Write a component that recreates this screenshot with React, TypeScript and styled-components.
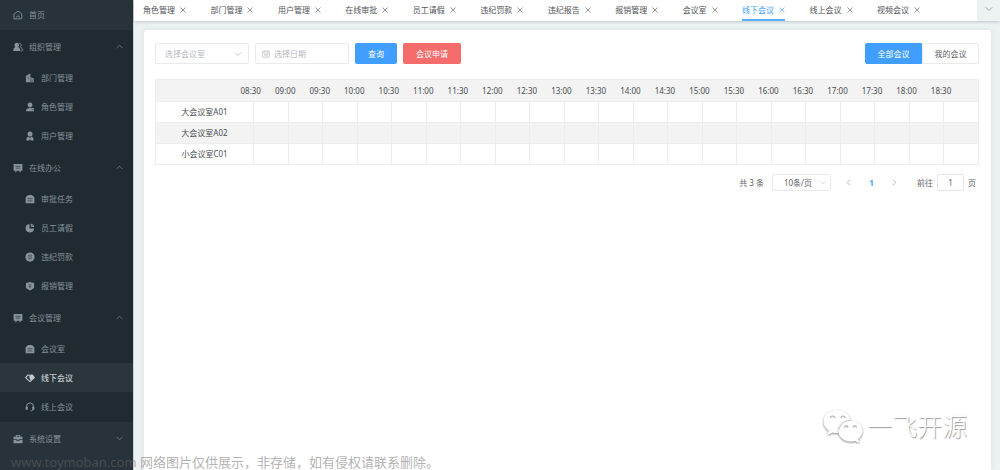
import React, { useState } from "react";
import styled, { createGlobalStyle } from "styled-components";

const GlobalStyle = createGlobalStyle`
  * { box-sizing: border-box; }
  body {
    margin: 0;
    background: #ecf1f2;
    color: #606266;
    font-family: "Noto Sans", "Noto Sans CJK SC", sans-serif;
    font-size: 8px;
    line-height: 12px;
  }
  button, input, select { font: inherit; color: inherit; margin: 0; }
  ul { list-style: none; margin: 0; padding: 0; }
`;

const Layout = styled.div`
  position: relative;
  display: flex;
  min-height: 100vh;
  overflow: hidden;
`;

/* ---------- sidebar ---------- */

const Sidebar = styled.nav`
  flex: 0 0 133px;
  background: #28323a;
  color: #87929a;
`;

const HomeLink = styled.a`
  display: flex;
  align-items: center;
  gap: 6px;
  height: 30px;
  padding: 0 13px;
  color: inherit;
  text-decoration: none;
`;

const Group = styled.section<{ $open: boolean }>`
  background: ${(p) => (p.$open ? "#202b31" : "#28323a")};
`;

const GroupButton = styled.button`
  display: flex;
  align-items: center;
  gap: 6px;
  width: 100%;
  height: 33px;
  padding: 0 10px 0 13px;
  border: 0;
  background: transparent;
  text-align: left;
  cursor: pointer;
`;

const GroupName = styled.span`
  flex: 1;
`;

const SubMenu = styled.ul`
  padding-bottom: 1px;
`;

const SubLink = styled.a<{ $active: boolean }>`
  display: flex;
  align-items: center;
  gap: 6px;
  height: 29px;
  padding-left: 25px;
  text-decoration: none;
  color: ${(p) => (p.$active ? "#c3cbcf" : "inherit")};
  background: ${(p) => (p.$active ? "#2b353c" : "transparent")};
  font-weight: ${(p) => (p.$active ? 500 : 400)};
`;

const IconSvg = styled.svg<{ $size: number }>`
  flex: none;
  display: block;
  width: ${(p) => p.$size}px;
  height: ${(p) => p.$size}px;
`;

/* ---------- main column ---------- */

const Main = styled.main`
  flex: 1;
  min-width: 0;
  display: flex;
  flex-direction: column;
  border-left: 1px solid #c9cfd2;
`;

const TabStrip = styled.div`
  display: flex;
  height: 21px;
  background: #fff;
  box-shadow: 0 1px 3px rgba(0, 21, 41, 0.2);
`;

const TabList = styled.div`
  flex: 1;
  display: flex;
  justify-content: space-between;
  padding: 0 57px 0 9px;
`;

const Tab = styled.div<{ $active: boolean }>`
  display: flex;
  align-items: center;
  gap: 5px;
  border-bottom: 2px solid ${(p) => (p.$active ? "#5aaeff" : "transparent")};
  color: ${(p) => (p.$active ? "#409eff" : "#4f5257")};
`;

const PlainButton = styled.button`
  display: flex;
  align-items: center;
  justify-content: center;
  padding: 0;
  border: 0;
  background: transparent;
  cursor: pointer;
`;

const CloseTab = styled(PlainButton)`
  opacity: 0.8;
`;

const MoreTabs = styled(PlainButton)`
  width: 23px;
  padding-bottom: 3px;
  background: #ecf1f2;
  color: #8a8f95;
`;

const Card = styled.section`
  flex: 1;
  margin: 9px 9px 0 10px;
  padding: 13px 12px 12px 11px;
  background: #fff;
  border-radius: 3px 3px 0 0;
  box-shadow: 0 0 6px rgba(0, 21, 41, 0.08);
`;

const Toolbar = styled.form`
  display: flex;
  align-items: center;
  gap: 6px;
  margin-bottom: 15px;
`;

const Field = styled.label<{ $width: number }>`
  display: flex;
  align-items: center;
  gap: 4px;
  width: ${(p) => p.$width}px;
  height: 21px;
  padding: 0 6px;
  border: 1px solid #e8eaee;
  border-radius: 2px;
  color: #b4b8c0;
`;

const FieldSelect = styled.select`
  flex: 1;
  min-width: 0;
  padding: 0 0 0 3px;
  border: 0;
  outline: 0;
  background: transparent;
  appearance: none;
`;

const FieldInput = styled.input`
  flex: 1;
  min-width: 0;
  padding: 0;
  border: 0;
  outline: 0;
  background: transparent;
  &::placeholder { color: #b4b8c0; opacity: 1; }
`;

const ActionButton = styled.button<{ $tone: "primary" | "danger" }>`
  height: 21px;
  padding: 0 13px;
  border: 0;
  border-radius: 2px;
  background: ${(p) => (p.$tone === "primary" ? "#409eff" : "#f56c6c")};
  color: #fff;
  cursor: pointer;
`;

const Segments = styled.div`
  display: flex;
  margin-left: auto;
`;

const Segment = styled.button<{ $active: boolean }>`
  width: 57px;
  height: 21px;
  padding: 0;
  border: 1px solid ${(p) => (p.$active ? "#409eff" : "#e8eaee")};
  background: ${(p) => (p.$active ? "#409eff" : "#fff")};
  color: ${(p) => (p.$active ? "#fff" : "#606266")};
  cursor: pointer;
  &:first-child { border-radius: 2px 0 0 2px; }
  &:last-child { border-radius: 0 2px 2px 0; }
`;

/* ---------- schedule ---------- */

const Schedule = styled.table`
  width: 100%;
  table-layout: fixed;
  border-collapse: collapse;
  color: #4a4d52;
`;

const RoomCol = styled.col`
  width: 98px;
`;

const HeadRow = styled.tr`
  height: 22px;
  background: #f3f3f3;
  border: 1px solid #ededed;
`;

const HeadCell = styled.th`
  padding: 0;
  font-weight: 400;
  text-align: left;
`;

/* Each label sits over the line that starts its half hour. */
const TimeLabel = styled.span`
  display: block;
  margin-left: -13px;
  white-space: nowrap;
`;

const RoomRow = styled.tr`
  height: 21px;
  &:nth-child(even) { background: #f3f3f3; }
`;

const RoomName = styled.th`
  padding: 0;
  border: 1px solid #ededed;
  font-weight: 400;
  text-align: center;
`;

const Slot = styled.td`
  padding: 0;
  border: 1px solid #ededed;
`;

/* ---------- pagination ---------- */

const Pager = styled.div`
  display: flex;
  align-items: center;
  justify-content: flex-end;
  margin-top: 9px;
  padding-right: 3px;
`;

const PageSize = styled(Field)`
  height: 17px;
  margin: 0 15px 0 8px;
  padding: 0 4px;
`;

const PageSizeSelect = styled(FieldSelect)`
  color: #606266;
  text-align: center;
  text-align-last: center;
`;

const PageButton = styled(PlainButton)<{ $current?: boolean }>`
  width: 23px;
  height: 17px;
  color: ${(p) => (p.$current ? "#409eff" : "#a9adb5")};
  font-weight: ${(p) => (p.$current ? 700 : 400)};
`;

const PageArrow = styled(PageButton)`
  width: 5px;
`;

const PageNumbers = styled.div`
  display: flex;
  align-items: center;
  gap: 9px;
  margin-right: 20px;
`;

const Jump = styled.label`
  display: flex;
  align-items: center;
  gap: 4px;
`;

const JumpInput = styled.input`
  width: 27px;
  height: 17px;
  padding: 0;
  border: 1px solid #e3e5ea;
  border-radius: 2px;
  text-align: center;
`;

/* ---------- overlays ---------- */

const Brand = styled.div`
  position: absolute;
  right: 33px;
  bottom: 24px;
  display: flex;
  align-items: center;
  gap: 3px;
  color: #fff;
  font-size: 25px;
  line-height: 40px;
  font-weight: 300;
  text-shadow: 1px 1px 1px #999;
  pointer-events: none;
`;

const BrandLogo = styled.svg`
  display: block;
  width: 42px;
  height: 36px;
`;

const Bubble = styled.g`
  filter: drop-shadow(0 1px 1px #888);
`;

const Notice = styled.p`
  position: absolute;
  left: 11px;
  bottom: -1px;
  margin: 0;
  font-size: 13px;
  line-height: 18px;
  white-space: nowrap;
  color: rgba(128, 128, 128, 0.62);
  pointer-events: none;
`;

const NoticeSite = styled.span`
  color: rgba(105, 105, 105, 0.5);
`;

/* ---------- icons ---------- */

type IconName =
  | "home" | "users" | "office" | "role" | "person" | "board" | "bag" | "pie"
  | "round" | "shield" | "tag" | "headset" | "toolbox" | "calendar"
  | "up" | "down" | "left" | "right" | "close";

const line = { fill: "none", stroke: "currentColor", strokeLinecap: "round", strokeLinejoin: "round" } as const;
const cut = "#39444b";

const shapes: Record<IconName, React.ReactNode> = {
  home: (
    <g {...line} strokeWidth="1.4">
      <path d="M2 6.2 8 1.6l6 4.6v7.900H2z" />
      <path d="M5.400 11.400a2.700 2.700 0 0 1 5.200 0" />
    </g>
  ),
  users: (
    <>
      <path fill="currentColor" d="M6 1.200a3.700 3.700 0 0 1 2.200 6.700c2 .8 3.300 2.600 3.300 5v1.600H.5v-1.600c0-2.400 1.300-4.200 3.300-5A3.700 3.700 0 0 1 6 1.200z" />
      <path {...line} strokeWidth="1.300" d="M10.500 2a3.200 3.200 0 0 1 1 6c2.300.8 3.600 2.500 3.600 5v1.200h-2.200" />
    </>
  ),
  office: (
    <>
      <path fill="currentColor" d="M1.500 14.600V4.400L8.600.9v5.300L14 8.600v6z" />
      <path stroke={cut} strokeWidth="1.100" d="M4 6.500h2.400M4 9.300h2.400M9.300 6v8.600M11.500 10v4" />
    </>
  ),
  role: (
    <>
      <circle cx="8" cy="4.800" r="3.900" fill="currentColor" />
      <path fill="currentColor" d="M1.500 14.800c0-3.500 2.500-5.300 6-5.300h7v2.300h-3.800v1h3.800v2z" />
    </>
  ),
  person: (
    <>
      <circle cx="8" cy="4.800" r="4" fill="currentColor" />
      <path fill="currentColor" d="M2 15c0-3.500 1.300-5.600 4-6.200l2 3 2-3c2.700.6 4 2.700 4 6.200H9.300L8 12.700 6.700 15z" />
    </>
  ),
  board: (
    <>
      <path fill="currentColor" d="M1 1.500h14v10.800h-3.200l1 2.500h-1.900l-1-2.500H6.100l-1 2.500H3.200l1-2.500H1z" />
      <path stroke={cut} strokeWidth="1.300" d="M4 5.300h8M4.500 8.200h7" />
    </>
  ),
  bag: (
    <>
      <path fill="currentColor" d="M1 5.200 5 1.500h6l4 3.700v9.500H1z" />
      <path stroke={cut} strokeWidth="1.300" d="M4 7.500h8M4 11h8" />
    </>
  ),
  pie: (
    <>
      <path fill="currentColor" d="M7.200 1.500v7.300h7.300A6.800 6.800 0 1 1 7.200 1.500z" />
      <path fill="currentColor" d="M9.300 1a6 6 0 0 1 5.500 5.500H9.300z" />
      <path stroke={cut} strokeWidth="1" d="m10 5.500 3.500-3.300" />
    </>
  ),
  round: (
    <>
      <circle cx="8" cy="8" r="7.400" fill="currentColor" />
      <path fill="none" stroke={cut} strokeWidth="1.200" d="M4.800 5.300h6.400M4.800 8h6.400M5.500 10.800h5" />
    </>
  ),
  shield: (
    <>
      <path fill="currentColor" d="M1.500 2.800H5L8 1l3 1.800h3.500v8.500L11 13.500 8 15.300l-3-1.800-3.500-2.200z" />
      <path fill="none" stroke={cut} strokeWidth="1.200" d="m6 4.800 2 2.400 2-2.400M8 7.200v4M6 8.800h4" />
    </>
  ),
  tag: (
    <>
      <path {...line} strokeWidth="1.700" d="M8 13.800 1 7.500l3.600-4.200L8 3.600l3.500-.5L15 7.200z" />
      <path fill="currentColor" d="m6.500 6.500 2.800-3.400 2.700.2 3 4-5.500 5.200z" />
    </>
  ),
  headset: (
    <>
      <path {...line} strokeWidth="1.600" d="M2.500 9V7a5.500 5.500 0 0 1 11 0v3.500c0 2.300-1.500 3.500-4 3.700" />
      <rect x="1" y="7" width="3.600" height="5.500" rx="1" fill="currentColor" />
      <rect x="11.400" y="7" width="3.600" height="5.500" rx="1" fill="currentColor" />
    </>
  ),
  toolbox: (
    <>
      <path fill="currentColor" d="M.8 4.200h3.700V1.500h7v2.700h3.700v4.200H.8zM6 4.200h4V2.900H6zM.8 9.600h4.700v1.600h5V9.600h4.700v5H.8z" />
      <path fill="currentColor" d="M6.800 8h2.400v2H6.800z" />
    </>
  ),
  calendar: <path {...line} strokeWidth="1.200" d="M1.500 2.500h13v12h-13zM1.500 6.200h13M4.800 1v3M11.200 1v3M4.500 9h7M4.500 11.700h7" />,
  up: <path {...line} strokeWidth="1.500" d="m2 11 6-6 6 6" />,
  down: <path {...line} strokeWidth="1.500" d="m2 5 6 6 6-6" />,
  left: <path {...line} strokeWidth="2" d="m11 2-6 6 6 6" />,
  right: <path {...line} strokeWidth="2" d="m5 2 6 6-6 6" />,
  close: <path {...line} strokeWidth="2" d="m2 2 12 12M14 2 2 14" />,
};

const Icon = ({ name, size = 10 }: { name: IconName; size?: number }) => (
  <IconSvg $size={size} viewBox="0 0 16 16" aria-hidden="true">{shapes[name]}</IconSvg>
);

/* ---------- data ---------- */

type MenuItem = { name: string; icon: IconName };
type MenuGroup = MenuItem & { items: MenuItem[] };

const menu: MenuGroup[] = [
  {
    name: "组织管理", icon: "users",
    items: [
      { name: "部门管理", icon: "office" },
      { name: "角色管理", icon: "role" },
      { name: "用户管理", icon: "person" },
    ],
  },
  {
    name: "在线办公", icon: "board",
    items: [
      { name: "审批任务", icon: "bag" },
      { name: "员工请假", icon: "pie" },
      { name: "违纪罚款", icon: "round" },
      { name: "报销管理", icon: "shield" },
    ],
  },
  {
    name: "会议管理", icon: "board",
    items: [
      { name: "会议室", icon: "bag" },
      { name: "线下会议", icon: "tag" },
      { name: "线上会议", icon: "headset" },
    ],
  },
  { name: "系统设置", icon: "toolbox", items: [] },
];

const tabs = [
  "角色管理", "部门管理", "用户管理", "在线审批", "员工请假", "违纪罚款",
  "违纪报告", "报销管理", "会议室", "线下会议", "线上会议", "视频会议",
];

const current = "线下会议";
const rooms = ["大会议室A01", "大会议室A02", "小会议室C01"];
const scopes = ["全部会议", "我的会议"];

const times = Array.from({ length: 21 }, (_, i) => {
  const minutes = 510 + i * 30;
  const hour = String(Math.floor(minutes / 60)).padStart(2, "0");
  return `${hour}:${minutes % 60 ? "30" : "00"}`;
});

export default function App() {
  const [scope, setScope] = useState(scopes[0]);

  return (
    <>
      <GlobalStyle />
      <Layout>
        <Sidebar>
          <HomeLink href="#home"><Icon name="home" />首页</HomeLink>
          {menu.map((group) => {
            const open = group.items.length > 0;
            return (
              <Group key={group.name} $open={open}>
                <GroupButton type="button" aria-expanded={open}>
                  <Icon name={group.icon} />
                  <GroupName>{group.name}</GroupName>
                  <Icon name={open ? "up" : "down"} size={7} />
                </GroupButton>
                {open && (
                  <SubMenu>
                    {group.items.map((item) => (
                      <li key={item.name}>
                        <SubLink href={`#${item.name}`} $active={item.name === current}>
                          <Icon name={item.icon} />
                          {item.name}
                        </SubLink>
                      </li>
                    ))}
                  </SubMenu>
                )}
              </Group>
            );
          })}
        </Sidebar>

        <Main>
          <TabStrip>
            <TabList>
              {tabs.map((tab) => (
                <Tab key={tab} $active={tab === current}>
                  <span>{tab}</span>
                  <CloseTab type="button" aria-label={`关闭${tab}`}><Icon name="close" size={6} /></CloseTab>
                </Tab>
              ))}
            </TabList>
            <MoreTabs type="button" aria-label="更多标签"><Icon name="down" size={8} /></MoreTabs>
          </TabStrip>

          <Card>
            <Toolbar onSubmit={(e) => e.preventDefault()}>
              <Field $width={94}>
                <FieldSelect aria-label="会议室" defaultValue="">
                  <option value="">选择会议室</option>
                  {rooms.map((room) => <option key={room}>{room}</option>)}
                </FieldSelect>
                <Icon name="down" size={8} />
              </Field>
              <Field $width={94}>
                <Icon name="calendar" size={8} />
                <FieldInput aria-label="日期" placeholder="选择日期" />
              </Field>
              <ActionButton type="submit" $tone="primary">查询</ActionButton>
              <ActionButton type="button" $tone="danger">会议申请</ActionButton>
              <Segments>
                {scopes.map((name) => (
                  <Segment key={name} type="button" $active={name === scope} onClick={() => setScope(name)}>
                    {name}
                  </Segment>
                ))}
              </Segments>
            </Toolbar>

            <Schedule>
              <colgroup>
                <RoomCol />
                {times.map((time) => <col key={time} />)}
              </colgroup>
              <thead>
                <HeadRow>
                  <HeadCell />
                  {times.map((time) => (
                    <HeadCell key={time} scope="col"><TimeLabel>{time}</TimeLabel></HeadCell>
                  ))}
                </HeadRow>
              </thead>
              <tbody>
                {rooms.map((room) => (
                  <RoomRow key={room}>
                    <RoomName scope="row">{room}</RoomName>
                    {times.map((time) => <Slot key={time} />)}
                  </RoomRow>
                ))}
              </tbody>
            </Schedule>

            <Pager>
              <span>共 3 条</span>
              <PageSize $width={59}>
                <PageSizeSelect aria-label="每页条数">
                  <option>10条/页</option>
                  <option>20条/页</option>
                </PageSizeSelect>
                <Icon name="down" size={6} />
              </PageSize>
              <PageNumbers>
                <PageArrow type="button" aria-label="上一页"><Icon name="left" size={7} /></PageArrow>
                <PageButton type="button" $current>1</PageButton>
                <PageArrow type="button" aria-label="下一页"><Icon name="right" size={7} /></PageArrow>
              </PageNumbers>
              <Jump>
                前往
                <JumpInput defaultValue="1" />
                页
              </Jump>
            </Pager>
          </Card>
        </Main>

        <Brand>
          <BrandLogo viewBox="0 0 42 36" aria-hidden="true">
            <Bubble>
              <path fill="#fff" d="M15 2C7.500 2 1.500 7 1.500 13.500c0 3.700 2 7 5.200 9L5.500 27l5-2.600c1.400.4 3 .6 4.500.6 7.500 0 13.500-5 13.500-11.500S22.500 2 15 2z" />
            </Bubble>
            <Bubble>
              <path fill="#fff" d="M28.500 12.500c-6.700 0-12 4.600-12 10.500s5.300 10.500 12 10.500c1.500 0 2.900-.2 4.200-.6l4.800 2-1.200-4c2.600-2 4.200-4.700 4.200-7.900 0-5.900-5.300-10.500-12-10.500z" />
            </Bubble>
            <path fill="none" stroke="#c2c2c2" strokeWidth="1" d="M17 21.500c.8-5 5.500-9 11.500-9" />
            <path fill="none" stroke="#aaa" strokeWidth="1.200" d="M8.500 10a2 2 0 0 1 4 0M19 10a2 2 0 0 1 4 0M22.500 19.500a1.700 1.700 0 0 1 3.400 0M31 19.500a1.700 1.700 0 0 1 3.400 0" />
          </BrandLogo>
          <span>一飞开源</span>
        </Brand>
        <Notice>
          <NoticeSite>www.toymoban.com</NoticeSite> 网络图片仅供展示，非存储，如有侵权请联系删除。
        </Notice>
      </Layout>
    </>
  );
}
